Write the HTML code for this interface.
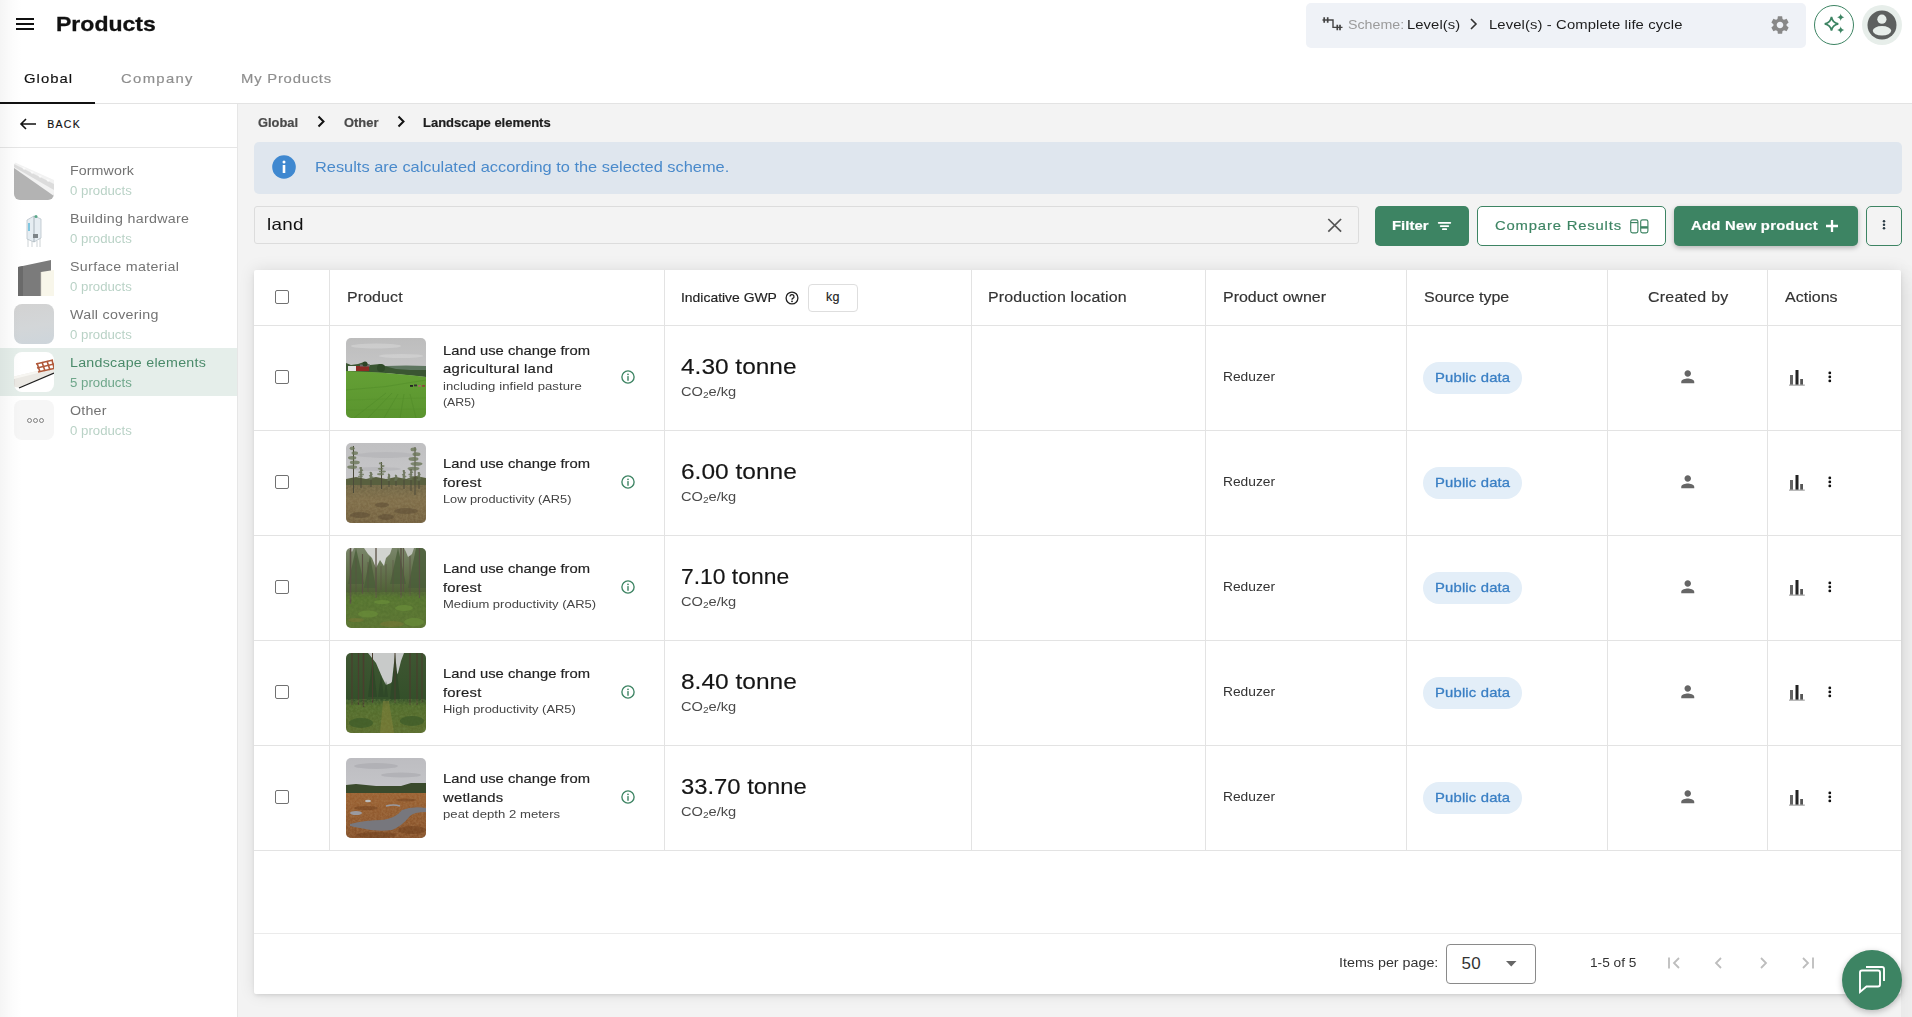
<!DOCTYPE html>
<html><head><meta charset="utf-8">
<style>
*{box-sizing:border-box;margin:0;padding:0}
html,body{width:1912px;height:1017px;overflow:hidden;background:#f3f3f3;font-family:"Liberation Sans",sans-serif;color:#222}
.a{position:absolute}
.t{position:absolute;white-space:nowrap;line-height:1}
svg.a{overflow:visible}
</style></head><body>
<div class="a" style="left:0px;top:0px;width:1912px;height:103px;background:#fff"></div>
<div class="a" style="left:0px;top:103px;width:1912px;height:1px;background:#e3e3e3"></div>
<div class="a" style="left:0px;top:104px;width:237px;height:913px;background:#fff"></div>
<div class="a" style="left:237px;top:104px;width:1px;height:913px;background:#e6e6e6"></div>
<div class="a" style="left:16px;top:18px;width:18px;height:2px;background:#111"></div>
<div class="a" style="left:16px;top:23px;width:18px;height:2px;background:#111"></div>
<div class="a" style="left:16px;top:28px;width:18px;height:2px;background:#111"></div>
<div class="t" id="tx0" style="left:56px;top:13.22px;font-size:21px;font-weight:700;color:#111;letter-spacing:0.000px;transform-origin:0 0;transform:scaleX(1.0970);-webkit-text-stroke:0.3px #111;">Products</div>
<div class="a" style="left:1306px;top:3px;width:500px;height:45px;background:#eff2f7;border-radius:5px"></div>
<svg class="a" style="left:1322px;top:16px;" width="22" height="16" viewBox="0 0 22 16"><g fill="none" stroke="#444"><path d="M2.2 1.2v5.5M5.7 1.2v5.5" stroke-width="1.7"/><path d="M0.5 4h10.5v7.4h9.5" stroke-width="1.4"/><path d="M15.3 8.8v5.4M18 8.8v5.4" stroke-width="1.7"/></g></svg>
<div class="t" id="tx1" style="left:1348px;top:18.30px;font-size:13px;font-weight:400;color:#9b9b9b;letter-spacing:0.000px;transform-origin:0 0;transform:scaleX(1.0940);">Scheme:</div>
<div class="t" id="tx2" style="left:1407px;top:18.30px;font-size:13px;font-weight:400;color:#1e1e1e;letter-spacing:0.058px;transform-origin:0 0;transform:scaleX(1.1400);">Level(s)</div>
<svg class="a" style="left:1469px;top:18px;" width="10" height="12" viewBox="0 0 10 12"><path d="M2 1l5 5-5 5" fill="none" stroke="#333" stroke-width="1.6"/></svg>
<div class="t" id="tx3" style="left:1488.6px;top:18.30px;font-size:13px;font-weight:400;color:#1e1e1e;letter-spacing:0.095px;transform-origin:0 0;transform:scaleX(1.1400);">Level(s) - Complete life cycle</div>
<svg class="a" style="left:1769px;top:13.5px" width="22" height="22" viewBox="0 0 24 24"><path fill="#888" d="M19.14 12.94c.04-.3.06-.61.06-.94 0-.32-.02-.64-.07-.94l2.03-1.58c.18-.14.23-.41.12-.61l-1.92-3.32c-.12-.22-.37-.29-.59-.22l-2.39.96c-.5-.38-1.03-.7-1.62-.94l-.36-2.54c-.04-.24-.24-.41-.48-.41h-3.84c-.24 0-.43.17-.47.41l-.36 2.54c-.59.24-1.13.57-1.62.94l-2.39-.96c-.22-.08-.47 0-.59.22L2.74 8.87c-.12.21-.08.47.12.61l2.03 1.58c-.05.3-.09.63-.09.94s.02.64.07.94l-2.03 1.58c-.18.14-.23.41-.12.61l1.92 3.32c.12.22.37.29.59.22l2.39-.96c.5.38 1.03.7 1.62.94l.36 2.54c.05.24.24.41.48.41h3.84c.24 0 .44-.17.47-.41l.36-2.54c.59-.24 1.13-.56 1.62-.94l2.39.96c.22.08.47 0 .59-.22l1.92-3.32c.12-.22.07-.47-.12-.61l-2.01-1.58zM12 15.6c-1.98 0-3.6-1.62-3.6-3.6s1.62-3.6 3.6-3.6 3.6 1.62 3.6 3.6-1.62 3.6-3.6 3.6z"/></svg>
<div class="a" style="left:1814px;top:5px;width:40px;height:40px;border:1.5px solid #3d8463;border-radius:50%;background:#fff"></div>
<svg class="a" style="left:1822px;top:12px;" width="24" height="24" viewBox="0 0 24 24"><g fill="#3d8463"><path d="M9.5 5 Q10.5 10.8 16.3 11.8 Q10.5 12.8 9.5 18.6 Q8.5 12.8 2.7 11.8 Q8.5 10.8 9.5 5Z" fill="none" stroke="#3d8463" stroke-width="1.7"/><path d="M18.7 1.6 Q19.2 4.8 22.3 5.3 Q19.2 5.8 18.7 9 Q18.2 5.8 15.1 5.3 Q18.2 4.8 18.7 1.6Z"/><path d="M18.7 14.3 Q19.2 17.5 22.3 18 Q19.2 18.5 18.7 21.7 Q18.2 18.5 15.1 18 Q18.2 17.5 18.7 14.3Z"/></g></svg>
<div class="a" style="left:1862px;top:5px;width:40px;height:40px;border-radius:50%;background:#e7eeea"></div>
<svg class="a" style="left:1867px;top:10px;" width="30" height="30" viewBox="0 0 30 30"><circle cx="15" cy="15" r="14.5" fill="#5d605f"/><circle cx="14.9" cy="9.2" r="4.6" fill="#e7eeea"/><ellipse cx="15" cy="20.8" rx="9.2" ry="4.8" fill="#e7eeea"/></svg>
<div class="t" id="tx4" style="left:23.5px;top:71.90px;font-size:13px;font-weight:400;color:#111;letter-spacing:0.903px;transform-origin:0 0;transform:scaleX(1.1400);-webkit-text-stroke:0.16px #111;">Global</div>
<div class="t" id="tx5" style="left:120.7px;top:71.90px;font-size:13px;font-weight:400;color:#8e8e8e;letter-spacing:1.178px;transform-origin:0 0;transform:scaleX(1.1400);-webkit-text-stroke:0.16px #8e8e8e;">Company</div>
<div class="t" id="tx6" style="left:241px;top:71.90px;font-size:13px;font-weight:400;color:#8e8e8e;letter-spacing:0.686px;transform-origin:0 0;transform:scaleX(1.1400);-webkit-text-stroke:0.16px #8e8e8e;">My Products</div>
<div class="a" style="left:0px;top:101.5px;width:95px;height:2.5px;background:#111"></div>
<svg class="a" style="left:19px;top:118px;" width="18" height="12" viewBox="0 0 18 12"><path d="M7 1L2 6l5 5M2 6h15" fill="none" stroke="#111" stroke-width="1.6"/></svg>
<div class="t" id="tx7" style="left:47.2px;top:118.91px;font-size:10.5px;font-weight:400;color:#111;letter-spacing:1.300px;transform-origin:0 0;transform:none;-webkit-text-stroke:0.3px #111;-webkit-text-stroke:0.16px #111;">BACK</div>
<div class="a" style="left:0px;top:147px;width:237px;height:1px;background:#e6e6e6"></div>
<svg class="a" style="left:14px;top:160px" width="40" height="40" viewBox="0 0 40 40"><defs><clipPath id="fwc"><rect width="40" height="40" rx="6"/></clipPath></defs><g clip-path="url(#fwc)"><path d="M0 7 L40 34 V40 H0Z" fill="#b3b3b3"/><path d="M0 2 L40 20 V36 L0 8Z" fill="#f2f2f2"/><path d="M0 4 L40 24 V30 L0 7Z" fill="#dcdcdc"/><g fill="#fafafa"><path d="M8 7l2 3 2-2z"/><path d="M16 11l2 3 2-2z"/><path d="M24 15l2 3 2-2z"/><path d="M32 19l2 3 2-2z"/></g></g></svg>
<div class="t" id="tx8" style="left:70.3px;top:165.12px;font-size:12.5px;font-weight:400;color:#737373;letter-spacing:0.062px;transform-origin:0 0;transform:scaleX(1.1400);">Formwork</div>
<div class="t" id="tx9" style="left:70.3px;top:185.24px;font-size:12px;font-weight:400;color:#b9d2c6;letter-spacing:0.000px;transform-origin:0 0;transform:scaleX(1.1019);">0 products</div>
<svg class="a" style="left:24px;top:214px" width="20" height="34" viewBox="0 0 20 34"><path d="M3 6 L10 2 L17 5 V24 L10 28 L3 25Z" fill="#e6edf2" stroke="#b9c3ca" stroke-width=".8"/><path d="M10 2 V28" stroke="#9aa6ae" stroke-width=".8"/><rect x="4" y="9" width="2" height="8" fill="#7fc6e0"/><path d="M4 33 V25 M8 33 V27 M13 33 V27 M16 33 V24" stroke="#c0c8cc" stroke-width=".8"/><rect x="9" y="20" width="5" height="4" fill="#7d8488"/><circle cx="12" cy="2.5" r="1.5" fill="#5aa88a"/></svg>
<div class="t" id="tx10" style="left:70.3px;top:213.12px;font-size:12.5px;font-weight:400;color:#737373;letter-spacing:0.272px;transform-origin:0 0;transform:scaleX(1.1400);">Building hardware</div>
<div class="t" id="tx11" style="left:70.3px;top:233.24px;font-size:12px;font-weight:400;color:#b9d2c6;letter-spacing:0.000px;transform-origin:0 0;transform:scaleX(1.1019);">0 products</div>
<svg class="a" style="left:17px;top:260px" width="38" height="37" viewBox="0 0 38 37"><path d="M1 7 L34 0 V36 H1Z" fill="#7b7b7b"/><path d="M1 7 L6 6 V36 H1Z" fill="#6a6a6a"/><path d="M24 12 L37 10 V36 H24Z" fill="#f8f6ea"/><path d="M24 12 V36" stroke="#d0cfc4" stroke-width=".6"/></svg>
<div class="t" id="tx12" style="left:70.3px;top:261.12px;font-size:12.5px;font-weight:400;color:#737373;letter-spacing:0.297px;transform-origin:0 0;transform:scaleX(1.1400);">Surface material</div>
<div class="t" id="tx13" style="left:70.3px;top:281.24px;font-size:12px;font-weight:400;color:#b9d2c6;letter-spacing:0.000px;transform-origin:0 0;transform:scaleX(1.1019);">0 products</div>
<div class="a" style="left:14px;top:304px;width:40px;height:40px;border-radius:8px;background:linear-gradient(170deg,#d2d2d2,#d3d6d8 55%,#cdd5db)"></div>
<div class="t" id="tx14" style="left:70.3px;top:309.12px;font-size:12.5px;font-weight:400;color:#737373;letter-spacing:0.251px;transform-origin:0 0;transform:scaleX(1.1400);">Wall covering</div>
<div class="t" id="tx15" style="left:70.3px;top:329.24px;font-size:12px;font-weight:400;color:#b9d2c6;letter-spacing:0.000px;transform-origin:0 0;transform:scaleX(1.1019);">0 products</div>
<div class="a" style="left:0px;top:348px;width:237px;height:48px;background:#e5eeea"></div>
<svg class="a" style="left:14px;top:352px" width="40" height="40" viewBox="0 0 40 40"><rect width="40" height="40" rx="8" fill="#fff"/><defs><clipPath id="lsc"><rect width="40" height="40" rx="8"/></clipPath></defs><g clip-path="url(#lsc)"><path d="M0 24.5 L40 15 V21 L6 35.5 L0 35Z" fill="#ebe9e4"/><path d="M0 24.5 L40 15 L40 17 L0 27Z" fill="#f7f6f2"/><path d="M0 27 V35" stroke="#d6d4cf" stroke-width="1"/><path d="M5 36 L40 21" stroke="#1e1e1e" stroke-width="1.3"/><g fill="none" stroke="#b0593a" stroke-width="1.6"><path d="M22 12 L39 8"/><path d="M23 16 L40 12"/><path d="M24 20 L40 16.5"/><path d="M23 11 L26 20"/><path d="M28 10 L31 19"/><path d="M33 9 L36 18"/><path d="M38 8 L40 16"/></g></g></svg>
<div class="t" id="tx16" style="left:70.3px;top:357.12px;font-size:12.5px;font-weight:400;color:#4a8a6a;letter-spacing:0.223px;transform-origin:0 0;transform:scaleX(1.1400);">Landscape elements</div>
<div class="t" id="tx17" style="left:70.3px;top:377.24px;font-size:12px;font-weight:400;color:#6fa78b;letter-spacing:0.000px;transform-origin:0 0;transform:scaleX(1.1019);">5 products</div>
<div class="a" style="left:14px;top:400px;width:40px;height:40px;border-radius:8px;background:#f6f6f6"></div><svg class="a" style="left:27px;top:418px" width="17" height="5" viewBox="0 0 17 5"><g fill="none" stroke="#666" stroke-width=".8"><circle cx="2.5" cy="2.5" r="2"/><circle cx="8.5" cy="2.5" r="2"/><circle cx="14.5" cy="2.5" r="2"/></g></svg>
<div class="t" id="tx18" style="left:70.3px;top:405.12px;font-size:12.5px;font-weight:400;color:#737373;letter-spacing:0.175px;transform-origin:0 0;transform:scaleX(1.1400);">Other</div>
<div class="t" id="tx19" style="left:70.3px;top:425.24px;font-size:12px;font-weight:400;color:#b9d2c6;letter-spacing:0.000px;transform-origin:0 0;transform:scaleX(1.1019);">0 products</div>
<div class="t" id="tx20" style="left:258.3px;top:116.84px;font-size:12px;font-weight:700;color:#4a4a4a;letter-spacing:0.000px;transform-origin:0 0;transform:scaleX(1.0719);-webkit-text-stroke:0.2px #4a4a4a;">Global</div>
<svg class="a" style="left:316px;top:115px;" width="10" height="13" viewBox="0 0 10 13"><path d="M2.5 1.5l5 5-5 5" fill="none" stroke="#111" stroke-width="2"/></svg>
<div class="t" id="tx21" style="left:343.6px;top:116.84px;font-size:12px;font-weight:700;color:#4a4a4a;letter-spacing:0.000px;transform-origin:0 0;transform:scaleX(1.0755);-webkit-text-stroke:0.2px #4a4a4a;">Other</div>
<svg class="a" style="left:396px;top:115px;" width="10" height="13" viewBox="0 0 10 13"><path d="M2.5 1.5l5 5-5 5" fill="none" stroke="#111" stroke-width="2"/></svg>
<div class="t" id="tx22" style="left:423px;top:116.84px;font-size:12px;font-weight:700;color:#1e1e1e;letter-spacing:0.000px;transform-origin:0 0;transform:scaleX(1.0811);-webkit-text-stroke:0.2px #1e1e1e;">Landscape elements</div>
<div class="a" style="left:254px;top:142px;width:1648px;height:52px;background:#dfe6ee;border-radius:5px"></div>
<svg class="a" style="left:272px;top:155px;" width="24" height="24" viewBox="0 0 24 24"><circle cx="12" cy="12" r="11.8" fill="#3f88d0"/><rect x="10.7" y="10" width="2.6" height="8" fill="#fff"/><circle cx="12" cy="7" r="1.5" fill="#fff"/></svg>
<div class="t" id="tx23" style="left:314.5px;top:159.73px;font-size:14.5px;font-weight:400;color:#4a8acb;letter-spacing:0.000px;transform-origin:0 0;transform:scaleX(1.1295);">Results are calculated according to the selected scheme.</div>
<div class="a" style="left:254px;top:206px;width:1105px;height:38px;border:1px solid #dcdcdc;border-radius:3px;background:#f3f3f3"></div>
<div class="t" id="tx24" style="left:267px;top:215.83px;font-size:16.5px;font-weight:400;color:#111;letter-spacing:0.273px;transform-origin:0 0;transform:scaleX(1.1400);">land</div>
<svg class="a" style="left:1327px;top:218px;" width="15" height="15" viewBox="0 0 15 15"><path d="M1.3 1l12.8 12.6M14.1 1L1.3 13.6" stroke="#555" stroke-width="1.7"/></svg>
<div class="a" style="left:1375px;top:206px;width:94px;height:40px;background:#3d8463;border-radius:5px"></div>
<div class="t" id="tx25" style="left:1392.4px;top:219.00px;font-size:13px;font-weight:700;color:#fff;letter-spacing:0.042px;transform-origin:0 0;transform:scaleX(1.1400);-webkit-text-stroke:0.2px #fff;">Filter</div>
<svg class="a" style="left:1438px;top:221px;" width="14" height="10" viewBox="0 0 14 10"><path d="M0.7 1.8h11.6M2.7 5.1h7.6M4.9 8.2h3.3" stroke="#fff" stroke-width="1.8" stroke-linecap="round"/></svg>
<div class="a" style="left:1477px;top:206px;width:189px;height:40px;border:1.5px solid #3d8463;border-radius:5px;background:#fff"></div>
<div class="t" id="tx26" style="left:1494.9px;top:219.00px;font-size:13px;font-weight:400;color:#3d8463;letter-spacing:0.726px;transform-origin:0 0;transform:scaleX(1.1400);-webkit-text-stroke:0.16px #3d8463;">Compare Results</div>
<svg class="a" style="left:1629px;top:219px;" width="20" height="14" viewBox="0 0 20 14"><g fill="none" stroke="#3d8463" stroke-width="1.15"><rect x="1.7" y="0.8" width="7.2" height="13" rx="1.8"/><path d="M1.7 3.6h7.2"/><rect x="11.7" y="0.8" width="7.2" height="13" rx="1.8"/></g><rect x="11.7" y="7.2" width="7.2" height="2.4" fill="#3d8463"/></svg>
<div class="a" style="left:1674px;top:206px;width:184px;height:40px;background:#3d8463;border-radius:5px;box-shadow:0 2px 5px rgba(0,0,0,.25)"></div>
<div class="t" id="tx27" style="left:1691.4px;top:219.00px;font-size:13px;font-weight:700;color:#fff;letter-spacing:0.258px;transform-origin:0 0;transform:scaleX(1.1400);-webkit-text-stroke:0.2px #fff;">Add New product</div>
<svg class="a" style="left:1826px;top:219.5px;" width="12" height="12" viewBox="0 0 12 12"><path d="M6 0v12M0 6h12" stroke="#fff" stroke-width="2.3"/></svg>
<div class="a" style="left:1866px;top:206px;width:36px;height:40px;border:1.5px solid #3d8463;border-radius:5px;background:transparent"></div>
<svg class="a" style="left:1882px;top:219px;" width="4" height="12" viewBox="0 0 4 12"><circle cx="2" cy="2.3" r="1.25" fill="#2a3a44"/><circle cx="2" cy="5.8" r="1.25" fill="#2a3a44"/><circle cx="2" cy="9.3" r="1.25" fill="#2a3a44"/></svg>
<div class="a" style="left:254px;top:270px;width:1647px;height:724px;background:#fff;border-radius:2px;box-shadow:0 2px 4px -1px rgba(0,0,0,.12),0 0 16px rgba(0,0,0,.10)"></div>
<div class="a" style="left:254px;top:325px;width:1647px;height:1px;background:#e3e3e3"></div>
<div class="a" style="left:254px;top:430px;width:1647px;height:1px;background:#e3e3e3"></div>
<div class="a" style="left:254px;top:535px;width:1647px;height:1px;background:#e3e3e3"></div>
<div class="a" style="left:254px;top:640px;width:1647px;height:1px;background:#e3e3e3"></div>
<div class="a" style="left:254px;top:745px;width:1647px;height:1px;background:#e3e3e3"></div>
<div class="a" style="left:254px;top:850px;width:1647px;height:1px;background:#e3e3e3"></div>
<div class="a" style="left:254px;top:933px;width:1647px;height:1px;background:#ebebeb"></div>
<div class="a" style="left:329px;top:270px;width:1px;height:580px;background:#e3e3e3"></div>
<div class="a" style="left:664px;top:270px;width:1px;height:580px;background:#e3e3e3"></div>
<div class="a" style="left:971px;top:270px;width:1px;height:580px;background:#e3e3e3"></div>
<div class="a" style="left:1205px;top:270px;width:1px;height:580px;background:#e3e3e3"></div>
<div class="a" style="left:1406px;top:270px;width:1px;height:580px;background:#e3e3e3"></div>
<div class="a" style="left:1607px;top:270px;width:1px;height:580px;background:#e3e3e3"></div>
<div class="a" style="left:1767px;top:270px;width:1px;height:580px;background:#e3e3e3"></div>
<div class="a" style="left:275px;top:290px;width:14px;height:14px;border:1.8px solid #717171;border-radius:2px"></div>
<div class="t" id="tx28" style="left:346.7px;top:289.95px;font-size:14px;font-weight:400;color:#333;letter-spacing:0.084px;transform-origin:0 0;transform:scaleX(1.1400);-webkit-text-stroke:0.16px #333;">Product</div>
<div class="t" id="tx29" style="left:681.4px;top:290.50px;font-size:13px;font-weight:400;color:#222;letter-spacing:0.000px;transform-origin:0 0;transform:scaleX(1.0705);-webkit-text-stroke:0.16px #222;">Indicative GWP</div>
<svg class="a" style="left:785px;top:291px;" width="14" height="14" viewBox="0 0 14 14"><circle cx="7" cy="7" r="5.9" fill="none" stroke="#222" stroke-width="1.3"/><path d="M5 5.6a2 2 0 1 1 2.8 1.8c-.6.3-.8.6-.8 1.3" fill="none" stroke="#222" stroke-width="1.3"/><circle cx="7" cy="10.3" r=".9" fill="#222"/></svg>
<div class="a" style="left:808px;top:284px;width:50px;height:28px;border:1px solid #dedede;border-radius:4px"></div>
<div class="t" id="tx30" style="left:826px;top:290.92px;font-size:12.5px;font-weight:400;color:#222;letter-spacing:0.300px;transform-origin:0 0;transform:none;-webkit-text-stroke:0.16px #222;">kg</div>
<div class="t" id="tx31" style="left:988.4px;top:289.95px;font-size:14px;font-weight:400;color:#333;letter-spacing:0.143px;transform-origin:0 0;transform:scaleX(1.1400);-webkit-text-stroke:0.16px #333;">Production location</div>
<div class="t" id="tx32" style="left:1222.6px;top:289.95px;font-size:14px;font-weight:400;color:#333;letter-spacing:0.004px;transform-origin:0 0;transform:scaleX(1.1400);-webkit-text-stroke:0.16px #333;">Product owner</div>
<div class="t" id="tx33" style="left:1423.6px;top:289.95px;font-size:14px;font-weight:400;color:#333;letter-spacing:0.000px;transform-origin:0 0;transform:scaleX(1.1400);-webkit-text-stroke:0.16px #333;">Source type</div>
<div class="t" id="tx34" style="left:1648px;top:289.95px;font-size:14px;font-weight:400;color:#333;letter-spacing:0.215px;transform-origin:0 0;transform:scaleX(1.1400);-webkit-text-stroke:0.16px #333;">Created by</div>
<div class="t" id="tx35" style="left:1785px;top:289.95px;font-size:14px;font-weight:400;color:#333;letter-spacing:0.033px;transform-origin:0 0;transform:scaleX(1.1400);-webkit-text-stroke:0.16px #333;">Actions</div>
<div class="a" style="left:275px;top:370px;width:14px;height:14px;border:1.8px solid #717171;border-radius:2px"></div>
<svg class="a" style="left:346px;top:338px;border-radius:5px" width="80" height="80" viewBox="0 0 80 80"><clipPath id="cagri"><rect width="80" height="80" rx="5"/></clipPath><g clip-path="url(#cagri)"><defs><linearGradient id="ag1" x1="0" y1="0" x2="0" y2="1"><stop offset="0" stop-color="#bdbdbd"/><stop offset="1" stop-color="#d2d2d4"/></linearGradient><linearGradient id="ag2" x1="0" y1="0" x2="0" y2="1"><stop offset="0" stop-color="#64a035"/><stop offset="1" stop-color="#5a942e"/></linearGradient></defs><rect width="80" height="80" fill="url(#ag1)"/><g fill="#d6d6d6" opacity=".6"><ellipse cx="30" cy="8" rx="25" ry="2.5"/><ellipse cx="55" cy="18" rx="22" ry="2"/></g><path d="M40 28 L60 27.5 L80 28 V33 H40Z" fill="#5e7660"/><path d="M0 30 L0 25 L5 27 L12 26 L18 24 L24 27 L34 26 L42 29 L50 31 L64 32 L80 32 V39 L40 35 L0 34Z" fill="#3a5632"/><rect x="2" y="28" width="8" height="5" fill="#e6e6e6"/><rect x="10" y="28" width="13" height="5" fill="#8e2a24"/><rect x="14" y="26.5" width="10" height="2" fill="#6a6a6a"/><circle cx="19" cy="26" r="2.5" fill="#2c4426"/><circle cx="35" cy="30" r="4" fill="#2f4a28"/><path d="M0 33 L25 34 Q55 36 80 39 V80 H0Z" fill="url(#ag2)"/><g stroke="#4a8426" stroke-width=".8" opacity=".45" fill="none"><path d="M0 52 Q40 50 80 42"/><path d="M0 62 L80 60" opacity=".5"/><path d="M0 72 L80 71" opacity=".5"/><path d="M8 80 L40 55"/><path d="M22 80 L46 55"/><path d="M38 80 L52 56"/><path d="M54 80 L58 56"/><path d="M70 80 L64 56"/></g><rect x="64" y="47" width="3" height="1.8" fill="#222"/><rect x="68" y="46.5" width="3" height="1.8" fill="#333"/><rect x="72" y="47" width="3" height="1.8" fill="#a07060"/><rect x="76" y="47" width="3" height="1.8" fill="#8a4a3a"/></g></svg>
<div class="t" id="tx36" style="left:442.6px;top:343.80px;font-size:13px;font-weight:400;color:#222;letter-spacing:0.000px;transform-origin:0 0;transform:scaleX(1.1369);-webkit-text-stroke:0.16px #222;">Land use change from</div>
<div class="t" id="tx37" style="left:442.6px;top:362.30px;font-size:13px;font-weight:400;color:#222;letter-spacing:0.294px;transform-origin:0 0;transform:scaleX(1.1400);-webkit-text-stroke:0.16px #222;">agricultural land</div>
<div class="t" id="tx38" style="left:442.6px;top:380.77px;font-size:11.5px;font-weight:400;color:#444;letter-spacing:0.066px;transform-origin:0 0;transform:scaleX(1.1400);">including infield pasture</div>
<div class="t" id="tx39" style="left:442.6px;top:397.07px;font-size:11.5px;font-weight:400;color:#444;letter-spacing:0.000px;transform-origin:0 0;transform:scaleX(1.0683);">(AR5)</div>
<svg class="a" style="left:620.5px;top:370px;" width="14" height="14" viewBox="0 0 14 14"><circle cx="7" cy="7" r="6.1" fill="none" stroke="#3d8463" stroke-width="1.35"/><path d="M7 6.6v3.6" stroke="#3d8463" stroke-width="1.4" stroke-linecap="round"/><circle cx="7" cy="4.3" r=".85" fill="#3d8463"/></svg>
<div class="t" id="tx40" style="left:681.4px;top:356.15px;font-size:22.5px;font-weight:400;color:#151515;letter-spacing:0.000px;transform-origin:0 0;transform:scaleX(1.0865);-webkit-text-stroke:0.16px #151515;">4.30 tonne</div>
<div class="t" id="tx41" style="left:681.4px;top:384.70px;font-size:13px;font-weight:400;color:#4a4a4a;letter-spacing:0.000px;transform-origin:0 0;transform:scaleX(1.1258);">CO<span style="font-size:9px;vertical-align:-2px">2</span>e/kg</div>
<div class="t" id="tx42" style="left:1222.8px;top:369.90px;font-size:13px;font-weight:400;color:#333;letter-spacing:0.000px;transform-origin:0 0;transform:scaleX(1.0603);">Reduzer</div>
<div class="a" style="left:1423px;top:362px;width:99px;height:32px;background:#e3eef8;border-radius:16px"></div>
<div class="t" id="tx43" style="left:1435.4px;top:371.00px;font-size:13px;font-weight:400;color:#3a7fc4;letter-spacing:0.154px;transform-origin:0 0;transform:scaleX(1.1400);-webkit-text-stroke:0.3px #3a7fc4;">Public data</div>
<svg class="a" style="left:1677.75px;top:367.4px" width="19.5" height="19.5" viewBox="0 0 24 24"><path fill="#666" d="M12 12c2.21 0 4-1.79 4-4s-1.79-4-4-4-4 1.79-4 4 1.79 4 4 4zm0 2c-2.67 0-8 1.34-8 4v2h16v-2c0-2.66-5.33-4-8-4z"/></svg>
<svg class="a" style="left:1788px;top:369px;" width="18" height="17" viewBox="0 0 18 17"><rect x="2" y="6" width="3" height="10" fill="#666"/><rect x="7.5" y="1" width="3" height="15" fill="#222"/><rect x="12.2" y="10" width="2.8" height="6" fill="#555"/><rect x="1" y="15.5" width="15.8" height="1.3" fill="#aaa"/></svg>
<svg class="a" style="left:1828px;top:371px;" width="4" height="12" viewBox="0 0 4 12"><circle cx="1.8" cy="1.9" r="1.4" fill="#111"/><circle cx="1.8" cy="5.9" r="1.4" fill="#111"/><circle cx="1.8" cy="9.9" r="1.4" fill="#111"/></svg>
<div class="a" style="left:275px;top:475px;width:14px;height:14px;border:1.8px solid #717171;border-radius:2px"></div>
<svg class="a" style="left:346px;top:443px;border-radius:5px" width="80" height="80" viewBox="0 0 80 80"><clipPath id="cflow"><rect width="80" height="80" rx="5"/></clipPath><g clip-path="url(#cflow)"><defs><linearGradient id="fl1" x1="0" y1="0" x2="0" y2="1"><stop offset="0" stop-color="#c0c0c2"/><stop offset="1" stop-color="#cdcdcf"/></linearGradient><linearGradient id="fl2" x1="0" y1="0" x2="0" y2="1"><stop offset="0" stop-color="#6f6646"/><stop offset=".4" stop-color="#806e4a"/><stop offset="1" stop-color="#73603f"/></linearGradient></defs><rect width="80" height="80" fill="url(#fl1)"/><g fill="#b3b3b6" opacity=".6"><ellipse cx="40" cy="12" rx="30" ry="3"/><ellipse cx="30" cy="26" rx="25" ry="2"/></g><path d="M0 36 L10 34 L20 36 L30 34 L40 36 L50 34 L60 36 L70 33 L80 35 V44 H0Z" fill="#59603f"/><rect y="42" width="80" height="38" fill="url(#fl2)"/><filter id="fln" x="0" y="0" width="1" height="1"><feTurbulence type="fractalNoise" baseFrequency=".4" numOctaves="2" seed="7"/><feColorMatrix values="0 0 0 0 0.3  0 0 0 0 0.24  0 0 0 0 0.12  0 0 0 -1.3 0.95"/></filter><rect y="42" width="80" height="38" fill="#000" filter="url(#fln)" opacity=".7"/><g fill="#5e4e36" opacity=".55"><ellipse cx="36" cy="62" rx="7" ry="2.5"/><ellipse cx="60" cy="68" rx="12" ry="3"/><ellipse cx="14" cy="72" rx="10" ry="3"/><ellipse cx="40" cy="74" rx="8" ry="3"/></g><path d="M7.5 3 V50" stroke="#4c4a3a" stroke-width="1"/><ellipse cx="6.2" cy="5.3" rx="2.5" ry="1.9" fill="#6a7658" opacity=".8"/><ellipse cx="8.8" cy="10.1" rx="3.3" ry="1.9" fill="#6a7658" opacity=".8"/><ellipse cx="6.2" cy="14.8" rx="4.2" ry="1.9" fill="#6a7658" opacity=".8"/><ellipse cx="8.8" cy="19.5" rx="5.0" ry="1.9" fill="#6a7658" opacity=".8"/><ellipse cx="6.2" cy="24.1" rx="5.0" ry="1.9" fill="#6a7658" opacity=".8"/><path d="M69 4 V52" stroke="#4c4a3a" stroke-width="1"/><ellipse cx="67.5" cy="6.4" rx="3.0" ry="1.9" fill="#6a7658" opacity=".8"/><ellipse cx="70.5" cy="11.2" rx="4.0" ry="1.9" fill="#6a7658" opacity=".8"/><ellipse cx="67.5" cy="16.0" rx="5.0" ry="1.9" fill="#6a7658" opacity=".8"/><ellipse cx="70.5" cy="20.8" rx="6.0" ry="1.9" fill="#6a7658" opacity=".8"/><ellipse cx="67.5" cy="25.6" rx="6.0" ry="1.9" fill="#6a7658" opacity=".8"/><path d="M35.5 19 V46" stroke="#4c4a3a" stroke-width="1"/><ellipse cx="34.6" cy="20.4" rx="1.8" ry="1.1" fill="#6a7658" opacity=".8"/><ellipse cx="36.4" cy="23.1" rx="2.3" ry="1.1" fill="#6a7658" opacity=".8"/><ellipse cx="34.6" cy="25.8" rx="2.9" ry="1.1" fill="#6a7658" opacity=".8"/><ellipse cx="36.4" cy="28.5" rx="3.5" ry="1.1" fill="#6a7658" opacity=".8"/><ellipse cx="34.6" cy="31.2" rx="3.5" ry="1.1" fill="#6a7658" opacity=".8"/><path d="M15 24 V45" stroke="#4c4a3a" stroke-width="1"/><ellipse cx="14.4" cy="25.1" rx="1.2" ry="1.0" fill="#6a7658" opacity=".8"/><ellipse cx="15.6" cy="27.2" rx="1.7" ry="1.0" fill="#6a7658" opacity=".8"/><ellipse cx="14.4" cy="29.2" rx="2.1" ry="1.0" fill="#6a7658" opacity=".8"/><ellipse cx="15.6" cy="31.4" rx="2.5" ry="1.0" fill="#6a7658" opacity=".8"/><ellipse cx="14.4" cy="33.5" rx="2.5" ry="1.0" fill="#6a7658" opacity=".8"/><path d="M25 29 V44" stroke="#4c4a3a" stroke-width="1"/><ellipse cx="24.5" cy="29.8" rx="1.0" ry="1.0" fill="#6a7658" opacity=".8"/><ellipse cx="25.5" cy="31.2" rx="1.3" ry="1.0" fill="#6a7658" opacity=".8"/><ellipse cx="24.5" cy="32.8" rx="1.7" ry="1.0" fill="#6a7658" opacity=".8"/><ellipse cx="25.5" cy="34.2" rx="2.0" ry="1.0" fill="#6a7658" opacity=".8"/><ellipse cx="24.5" cy="35.8" rx="2.0" ry="1.0" fill="#6a7658" opacity=".8"/><path d="M58 27 V46" stroke="#4c4a3a" stroke-width="1"/><ellipse cx="57.5" cy="27.9" rx="1.0" ry="1.0" fill="#6a7658" opacity=".8"/><ellipse cx="58.5" cy="29.8" rx="1.3" ry="1.0" fill="#6a7658" opacity=".8"/><ellipse cx="57.5" cy="31.8" rx="1.7" ry="1.0" fill="#6a7658" opacity=".8"/><ellipse cx="58.5" cy="33.6" rx="2.0" ry="1.0" fill="#6a7658" opacity=".8"/><ellipse cx="57.5" cy="35.5" rx="2.0" ry="1.0" fill="#6a7658" opacity=".8"/><path d="M65 26 V48" stroke="#4c4a3a" stroke-width="1"/><ellipse cx="64.4" cy="27.1" rx="1.2" ry="1.0" fill="#6a7658" opacity=".8"/><ellipse cx="65.6" cy="29.3" rx="1.7" ry="1.0" fill="#6a7658" opacity=".8"/><ellipse cx="64.4" cy="31.5" rx="2.1" ry="1.0" fill="#6a7658" opacity=".8"/><ellipse cx="65.6" cy="33.7" rx="2.5" ry="1.0" fill="#6a7658" opacity=".8"/><ellipse cx="64.4" cy="35.9" rx="2.5" ry="1.0" fill="#6a7658" opacity=".8"/><path d="M73 29 V46" stroke="#4c4a3a" stroke-width="1"/><ellipse cx="72.5" cy="29.9" rx="1.0" ry="1.0" fill="#6a7658" opacity=".8"/><ellipse cx="73.5" cy="31.6" rx="1.3" ry="1.0" fill="#6a7658" opacity=".8"/><ellipse cx="72.5" cy="33.2" rx="1.7" ry="1.0" fill="#6a7658" opacity=".8"/><ellipse cx="73.5" cy="35.0" rx="2.0" ry="1.0" fill="#6a7658" opacity=".8"/><ellipse cx="72.5" cy="36.7" rx="2.0" ry="1.0" fill="#6a7658" opacity=".8"/><path d="M43 31 V44" stroke="#4c4a3a" stroke-width="1"/><ellipse cx="42.6" cy="31.6" rx="0.8" ry="1.0" fill="#6a7658" opacity=".8"/><ellipse cx="43.4" cy="32.9" rx="1.0" ry="1.0" fill="#6a7658" opacity=".8"/><ellipse cx="42.6" cy="34.2" rx="1.2" ry="1.0" fill="#6a7658" opacity=".8"/><ellipse cx="43.4" cy="35.5" rx="1.5" ry="1.0" fill="#6a7658" opacity=".8"/><ellipse cx="42.6" cy="36.9" rx="1.5" ry="1.0" fill="#6a7658" opacity=".8"/><path d="M50 32 V43" stroke="#4c4a3a" stroke-width="1"/><ellipse cx="49.6" cy="32.5" rx="0.8" ry="1.0" fill="#6a7658" opacity=".8"/><ellipse cx="50.4" cy="33.6" rx="1.0" ry="1.0" fill="#6a7658" opacity=".8"/><ellipse cx="49.6" cy="34.8" rx="1.2" ry="1.0" fill="#6a7658" opacity=".8"/><ellipse cx="50.4" cy="35.8" rx="1.5" ry="1.0" fill="#6a7658" opacity=".8"/><ellipse cx="49.6" cy="36.9" rx="1.5" ry="1.0" fill="#6a7658" opacity=".8"/></g></svg>
<div class="t" id="tx44" style="left:442.6px;top:457.10px;font-size:13px;font-weight:400;color:#222;letter-spacing:0.000px;transform-origin:0 0;transform:scaleX(1.1369);-webkit-text-stroke:0.16px #222;">Land use change from</div>
<div class="t" id="tx45" style="left:442.6px;top:475.60px;font-size:13px;font-weight:400;color:#222;letter-spacing:0.214px;transform-origin:0 0;transform:scaleX(1.1400);-webkit-text-stroke:0.16px #222;">forest</div>
<div class="t" id="tx46" style="left:442.6px;top:494.07px;font-size:11.5px;font-weight:400;color:#444;letter-spacing:0.000px;transform-origin:0 0;transform:scaleX(1.1101);">Low productivity (AR5)</div>
<svg class="a" style="left:620.5px;top:475px;" width="14" height="14" viewBox="0 0 14 14"><circle cx="7" cy="7" r="6.1" fill="none" stroke="#3d8463" stroke-width="1.35"/><path d="M7 6.6v3.6" stroke="#3d8463" stroke-width="1.4" stroke-linecap="round"/><circle cx="7" cy="4.3" r=".85" fill="#3d8463"/></svg>
<div class="t" id="tx47" style="left:681.4px;top:461.15px;font-size:22.5px;font-weight:400;color:#151515;letter-spacing:0.000px;transform-origin:0 0;transform:scaleX(1.0884);-webkit-text-stroke:0.16px #151515;">6.00 tonne</div>
<div class="t" id="tx48" style="left:681.4px;top:489.70px;font-size:13px;font-weight:400;color:#4a4a4a;letter-spacing:0.000px;transform-origin:0 0;transform:scaleX(1.1258);">CO<span style="font-size:9px;vertical-align:-2px">2</span>e/kg</div>
<div class="t" id="tx49" style="left:1222.8px;top:474.90px;font-size:13px;font-weight:400;color:#333;letter-spacing:0.000px;transform-origin:0 0;transform:scaleX(1.0603);">Reduzer</div>
<div class="a" style="left:1423px;top:467px;width:99px;height:32px;background:#e3eef8;border-radius:16px"></div>
<div class="t" id="tx50" style="left:1435.4px;top:476.00px;font-size:13px;font-weight:400;color:#3a7fc4;letter-spacing:0.154px;transform-origin:0 0;transform:scaleX(1.1400);-webkit-text-stroke:0.3px #3a7fc4;">Public data</div>
<svg class="a" style="left:1677.75px;top:472.4px" width="19.5" height="19.5" viewBox="0 0 24 24"><path fill="#666" d="M12 12c2.21 0 4-1.79 4-4s-1.79-4-4-4-4 1.79-4 4 1.79 4 4 4zm0 2c-2.67 0-8 1.34-8 4v2h16v-2c0-2.66-5.33-4-8-4z"/></svg>
<svg class="a" style="left:1788px;top:474px;" width="18" height="17" viewBox="0 0 18 17"><rect x="2" y="6" width="3" height="10" fill="#666"/><rect x="7.5" y="1" width="3" height="15" fill="#222"/><rect x="12.2" y="10" width="2.8" height="6" fill="#555"/><rect x="1" y="15.5" width="15.8" height="1.3" fill="#aaa"/></svg>
<svg class="a" style="left:1828px;top:476px;" width="4" height="12" viewBox="0 0 4 12"><circle cx="1.8" cy="1.9" r="1.4" fill="#111"/><circle cx="1.8" cy="5.9" r="1.4" fill="#111"/><circle cx="1.8" cy="9.9" r="1.4" fill="#111"/></svg>
<div class="a" style="left:275px;top:580px;width:14px;height:14px;border:1.8px solid #717171;border-radius:2px"></div>
<svg class="a" style="left:346px;top:548px;border-radius:5px" width="80" height="80" viewBox="0 0 80 80"><clipPath id="cfmed"><rect width="80" height="80" rx="5"/></clipPath><g clip-path="url(#cfmed)"><defs><linearGradient id="fm1" x1="0" y1="0" x2="0" y2="1"><stop offset="0" stop-color="#7a866a"/><stop offset=".35" stop-color="#5f6e48"/><stop offset=".55" stop-color="#4f6236"/><stop offset=".62" stop-color="#557430"/><stop offset="1" stop-color="#5a7232"/></linearGradient><filter id="fmn" x="0" y="0" width="1" height="1"><feTurbulence type="fractalNoise" baseFrequency=".35" numOctaves="2" seed="3"/><feColorMatrix values="0 0 0 0 0.15  0 0 0 0 0.25  0 0 0 0 0.05  0 0 0 -1.2 0.9"/></filter></defs><rect width="80" height="80" fill="url(#fm1)"/><path d="M18 0 H46 L44 6 L40 10 L38 18 L34 12 L30 20 L26 10 L22 6Z" fill="#d2d4d0"/><path d="M58 0 H68 L66 6 L62 9 L60 4Z" fill="#c0c4bc"/><path d="M2 0 H8 L6 4Z" fill="#b8bcb4"/><g fill="#4a5e3a" opacity=".8"><path d="M10 0 L2 36 H18Z"/><path d="M24 8 L18 40 H30Z"/><path d="M52 0 L44 36 H60Z"/><path d="M70 0 L62 40 H80 V0Z"/></g><path d="M4.5 0 V56" stroke="#5a5044" stroke-width="1.6"/><path d="M16.5 6 V46" stroke="#5a5044" stroke-width="1.1"/><path d="M30 0 V50" stroke="#5a5044" stroke-width="1.3"/><path d="M55 0 V50" stroke="#5a5044" stroke-width="1.3"/><path d="M57.5 0 V44" stroke="#5a5044" stroke-width="0.8"/><path d="M73.5 0 V50" stroke="#5a5044" stroke-width="1.2"/><path d="M10 10 V44" stroke="#5a5044" stroke-width="0.7"/><path d="M22 14 V44" stroke="#5a5044" stroke-width="0.7"/><path d="M40 16 V44" stroke="#5a5044" stroke-width="0.7"/><path d="M64 8 V48" stroke="#5a5044" stroke-width="0.8"/><path d="M47 12 V44" stroke="#5a5044" stroke-width="0.6"/><path d="M35 18 V42" stroke="#5a5044" stroke-width="0.6"/><rect y="44" width="80" height="36" fill="#000" filter="url(#fmn)" opacity=".6"/><g fill="#6a8e3a" opacity=".7"><ellipse cx="22" cy="66" rx="10" ry="3.5"/><ellipse cx="58" cy="60" rx="9" ry="3"/><ellipse cx="68" cy="74" rx="10" ry="4"/><ellipse cx="36" cy="54" rx="8" ry="2"/></g><g fill="#8a7a3a" opacity=".35"><ellipse cx="46" cy="76" rx="12" ry="3"/><ellipse cx="10" cy="72" rx="8" ry="2"/></g></g></svg>
<div class="t" id="tx51" style="left:442.6px;top:562.10px;font-size:13px;font-weight:400;color:#222;letter-spacing:0.000px;transform-origin:0 0;transform:scaleX(1.1369);-webkit-text-stroke:0.16px #222;">Land use change from</div>
<div class="t" id="tx52" style="left:442.6px;top:580.60px;font-size:13px;font-weight:400;color:#222;letter-spacing:0.214px;transform-origin:0 0;transform:scaleX(1.1400);-webkit-text-stroke:0.16px #222;">forest</div>
<div class="t" id="tx53" style="left:442.6px;top:599.07px;font-size:11.5px;font-weight:400;color:#444;letter-spacing:0.000px;transform-origin:0 0;transform:scaleX(1.1303);">Medium productivity (AR5)</div>
<svg class="a" style="left:620.5px;top:580px;" width="14" height="14" viewBox="0 0 14 14"><circle cx="7" cy="7" r="6.1" fill="none" stroke="#3d8463" stroke-width="1.35"/><path d="M7 6.6v3.6" stroke="#3d8463" stroke-width="1.4" stroke-linecap="round"/><circle cx="7" cy="4.3" r=".85" fill="#3d8463"/></svg>
<div class="t" id="tx54" style="left:681.4px;top:566.15px;font-size:22.5px;font-weight:400;color:#151515;letter-spacing:0.000px;transform-origin:0 0;transform:scaleX(1.0166);-webkit-text-stroke:0.16px #151515;">7.10 tonne</div>
<div class="t" id="tx55" style="left:681.4px;top:594.70px;font-size:13px;font-weight:400;color:#4a4a4a;letter-spacing:0.000px;transform-origin:0 0;transform:scaleX(1.1258);">CO<span style="font-size:9px;vertical-align:-2px">2</span>e/kg</div>
<div class="t" id="tx56" style="left:1222.8px;top:579.90px;font-size:13px;font-weight:400;color:#333;letter-spacing:0.000px;transform-origin:0 0;transform:scaleX(1.0603);">Reduzer</div>
<div class="a" style="left:1423px;top:572px;width:99px;height:32px;background:#e3eef8;border-radius:16px"></div>
<div class="t" id="tx57" style="left:1435.4px;top:581.00px;font-size:13px;font-weight:400;color:#3a7fc4;letter-spacing:0.154px;transform-origin:0 0;transform:scaleX(1.1400);-webkit-text-stroke:0.3px #3a7fc4;">Public data</div>
<svg class="a" style="left:1677.75px;top:577.4px" width="19.5" height="19.5" viewBox="0 0 24 24"><path fill="#666" d="M12 12c2.21 0 4-1.79 4-4s-1.79-4-4-4-4 1.79-4 4 1.79 4 4 4zm0 2c-2.67 0-8 1.34-8 4v2h16v-2c0-2.66-5.33-4-8-4z"/></svg>
<svg class="a" style="left:1788px;top:579px;" width="18" height="17" viewBox="0 0 18 17"><rect x="2" y="6" width="3" height="10" fill="#666"/><rect x="7.5" y="1" width="3" height="15" fill="#222"/><rect x="12.2" y="10" width="2.8" height="6" fill="#555"/><rect x="1" y="15.5" width="15.8" height="1.3" fill="#aaa"/></svg>
<svg class="a" style="left:1828px;top:581px;" width="4" height="12" viewBox="0 0 4 12"><circle cx="1.8" cy="1.9" r="1.4" fill="#111"/><circle cx="1.8" cy="5.9" r="1.4" fill="#111"/><circle cx="1.8" cy="9.9" r="1.4" fill="#111"/></svg>
<div class="a" style="left:275px;top:685px;width:14px;height:14px;border:1.8px solid #717171;border-radius:2px"></div>
<svg class="a" style="left:346px;top:653px;border-radius:5px" width="80" height="80" viewBox="0 0 80 80"><clipPath id="cfhigh"><rect width="80" height="80" rx="5"/></clipPath><g clip-path="url(#cfhigh)"><defs><linearGradient id="fh1" x1="0" y1="0" x2="0" y2="1"><stop offset="0" stop-color="#3e5632"/><stop offset=".58" stop-color="#34502a"/><stop offset=".66" stop-color="#526c2c"/><stop offset="1" stop-color="#5c6c2e"/></linearGradient></defs><rect width="80" height="80" fill="url(#fh1)"/><path d="M22 0 H58 L55 8 L52 20 L45 30 L40 32 L36 24 L30 10 L26 5Z" fill="#c8cac9"/><g fill="#2f4828"><path d="M26.5 6 L22 44 H31Z"/><path d="M49 1 L44 46 H54Z"/><path d="M35 22 L32 44 H38Z"/><path d="M40 28 L38 44 H42Z"/></g><path d="M6 0 V52" stroke="#4a3e2e" stroke-width="1.2"/><path d="M12.5 0 V52" stroke="#4a3e2e" stroke-width="1.3"/><path d="M17.5 0 V54" stroke="#4a3e2e" stroke-width="1.5"/><path d="M26.5 0 V50" stroke="#4a3e2e" stroke-width="1"/><path d="M49 0 V50" stroke="#4a3e2e" stroke-width="1"/><path d="M64 0 V52" stroke="#4a3e2e" stroke-width="1.3"/><path d="M71 0 V52" stroke="#4a3e2e" stroke-width="1.2"/><path d="M76 0 V50" stroke="#4a3e2e" stroke-width="1"/><filter id="fhn" x="0" y="0" width="1" height="1"><feTurbulence type="fractalNoise" baseFrequency=".4" numOctaves="2" seed="11"/><feColorMatrix values="0 0 0 0 0.15  0 0 0 0 0.24  0 0 0 0 0.06  0 0 0 -1.3 0.95"/></filter><rect y="46" width="80" height="34" fill="#000" filter="url(#fhn)" opacity=".7"/><path d="M37 48 L43 48 L48 80 H34Z" fill="#9a8a40" opacity=".35"/><g fill="#3c5a28" opacity=".7"><ellipse cx="15" cy="70" rx="12" ry="5"/><ellipse cx="66" cy="68" rx="12" ry="5"/></g></g></svg>
<div class="t" id="tx58" style="left:442.6px;top:667.10px;font-size:13px;font-weight:400;color:#222;letter-spacing:0.000px;transform-origin:0 0;transform:scaleX(1.1369);-webkit-text-stroke:0.16px #222;">Land use change from</div>
<div class="t" id="tx59" style="left:442.6px;top:685.60px;font-size:13px;font-weight:400;color:#222;letter-spacing:0.214px;transform-origin:0 0;transform:scaleX(1.1400);-webkit-text-stroke:0.16px #222;">forest</div>
<div class="t" id="tx60" style="left:442.6px;top:704.07px;font-size:11.5px;font-weight:400;color:#444;letter-spacing:0.000px;transform-origin:0 0;transform:scaleX(1.1235);">High productivity (AR5)</div>
<svg class="a" style="left:620.5px;top:685px;" width="14" height="14" viewBox="0 0 14 14"><circle cx="7" cy="7" r="6.1" fill="none" stroke="#3d8463" stroke-width="1.35"/><path d="M7 6.6v3.6" stroke="#3d8463" stroke-width="1.4" stroke-linecap="round"/><circle cx="7" cy="4.3" r=".85" fill="#3d8463"/></svg>
<div class="t" id="tx61" style="left:681.4px;top:671.15px;font-size:22.5px;font-weight:400;color:#151515;letter-spacing:0.000px;transform-origin:0 0;transform:scaleX(1.0884);-webkit-text-stroke:0.16px #151515;">8.40 tonne</div>
<div class="t" id="tx62" style="left:681.4px;top:699.70px;font-size:13px;font-weight:400;color:#4a4a4a;letter-spacing:0.000px;transform-origin:0 0;transform:scaleX(1.1258);">CO<span style="font-size:9px;vertical-align:-2px">2</span>e/kg</div>
<div class="t" id="tx63" style="left:1222.8px;top:684.90px;font-size:13px;font-weight:400;color:#333;letter-spacing:0.000px;transform-origin:0 0;transform:scaleX(1.0603);">Reduzer</div>
<div class="a" style="left:1423px;top:677px;width:99px;height:32px;background:#e3eef8;border-radius:16px"></div>
<div class="t" id="tx64" style="left:1435.4px;top:686.00px;font-size:13px;font-weight:400;color:#3a7fc4;letter-spacing:0.154px;transform-origin:0 0;transform:scaleX(1.1400);-webkit-text-stroke:0.3px #3a7fc4;">Public data</div>
<svg class="a" style="left:1677.75px;top:682.4px" width="19.5" height="19.5" viewBox="0 0 24 24"><path fill="#666" d="M12 12c2.21 0 4-1.79 4-4s-1.79-4-4-4-4 1.79-4 4 1.79 4 4 4zm0 2c-2.67 0-8 1.34-8 4v2h16v-2c0-2.66-5.33-4-8-4z"/></svg>
<svg class="a" style="left:1788px;top:684px;" width="18" height="17" viewBox="0 0 18 17"><rect x="2" y="6" width="3" height="10" fill="#666"/><rect x="7.5" y="1" width="3" height="15" fill="#222"/><rect x="12.2" y="10" width="2.8" height="6" fill="#555"/><rect x="1" y="15.5" width="15.8" height="1.3" fill="#aaa"/></svg>
<svg class="a" style="left:1828px;top:686px;" width="4" height="12" viewBox="0 0 4 12"><circle cx="1.8" cy="1.9" r="1.4" fill="#111"/><circle cx="1.8" cy="5.9" r="1.4" fill="#111"/><circle cx="1.8" cy="9.9" r="1.4" fill="#111"/></svg>
<div class="a" style="left:275px;top:790px;width:14px;height:14px;border:1.8px solid #717171;border-radius:2px"></div>
<svg class="a" style="left:346px;top:758px;border-radius:5px" width="80" height="80" viewBox="0 0 80 80"><clipPath id="cwet"><rect width="80" height="80" rx="5"/></clipPath><g clip-path="url(#cwet)"><defs><linearGradient id="wt1" x1="0" y1="0" x2="0" y2="1"><stop offset="0" stop-color="#bdbdc1"/><stop offset="1" stop-color="#cfd0d3"/></linearGradient><linearGradient id="wt2" x1="0" y1="0" x2="0" y2="1"><stop offset="0" stop-color="#9c6232"/><stop offset="1" stop-color="#84502a"/></linearGradient></defs><rect width="80" height="80" fill="url(#wt1)"/><g fill="#a9a9ae" opacity=".6"><ellipse cx="30" cy="8" rx="22" ry="3"/><ellipse cx="55" cy="17" rx="20" ry="2.5"/></g><path d="M0 27 L10 26 L30 28 L55 28 L65 25 L80 25 V35 H0Z" fill="#3a4a2c"/><rect y="35" width="80" height="45" fill="url(#wt2)"/><filter id="wtn" x="0" y="0" width="1" height="1"><feTurbulence type="fractalNoise" baseFrequency=".45" numOctaves="2" seed="5"/><feColorMatrix values="0 0 0 0 0.4  0 0 0 0 0.2  0 0 0 0 0.08  0 0 0 -1.3 0.95"/></filter><rect y="35" width="80" height="45" fill="#000" filter="url(#wtn)" opacity=".75"/><path d="M4 66 Q20 62 36 62 Q50 60 56 52 Q66 48 80 50 V54 Q68 54 64 58 Q56 68 46 72 Q30 74 14 70 Q8 69 4 68Z" fill="#77777d"/><path d="M40 48 Q48 46 54 48" stroke="#9a9aa0" stroke-width="1.5" fill="none"/><ellipse cx="10" cy="55" rx="6" ry="2" fill="#9a9aa0"/><ellipse cx="22" cy="43" rx="3" ry="1.2" fill="#bbb"/><g fill="#6a3c1c" opacity=".45"><ellipse cx="30" cy="77" rx="20" ry="3"/><ellipse cx="66" cy="72" rx="14" ry="4"/><ellipse cx="20" cy="50" rx="12" ry="2"/><ellipse cx="60" cy="42" rx="10" ry="1.5"/></g></g></svg>
<div class="t" id="tx65" style="left:442.6px;top:772.10px;font-size:13px;font-weight:400;color:#222;letter-spacing:0.000px;transform-origin:0 0;transform:scaleX(1.1369);-webkit-text-stroke:0.16px #222;">Land use change from</div>
<div class="t" id="tx66" style="left:442.6px;top:790.60px;font-size:13px;font-weight:400;color:#222;letter-spacing:0.224px;transform-origin:0 0;transform:scaleX(1.1400);-webkit-text-stroke:0.16px #222;">wetlands</div>
<div class="t" id="tx67" style="left:442.6px;top:809.07px;font-size:11.5px;font-weight:400;color:#444;letter-spacing:0.026px;transform-origin:0 0;transform:scaleX(1.1400);">peat depth 2 meters</div>
<svg class="a" style="left:620.5px;top:790px;" width="14" height="14" viewBox="0 0 14 14"><circle cx="7" cy="7" r="6.1" fill="none" stroke="#3d8463" stroke-width="1.35"/><path d="M7 6.6v3.6" stroke="#3d8463" stroke-width="1.4" stroke-linecap="round"/><circle cx="7" cy="4.3" r=".85" fill="#3d8463"/></svg>
<div class="t" id="tx68" style="left:681.4px;top:776.15px;font-size:22.5px;font-weight:400;color:#151515;letter-spacing:0.000px;transform-origin:0 0;transform:scaleX(1.0583);-webkit-text-stroke:0.16px #151515;">33.70 tonne</div>
<div class="t" id="tx69" style="left:681.4px;top:804.70px;font-size:13px;font-weight:400;color:#4a4a4a;letter-spacing:0.000px;transform-origin:0 0;transform:scaleX(1.1258);">CO<span style="font-size:9px;vertical-align:-2px">2</span>e/kg</div>
<div class="t" id="tx70" style="left:1222.8px;top:789.90px;font-size:13px;font-weight:400;color:#333;letter-spacing:0.000px;transform-origin:0 0;transform:scaleX(1.0603);">Reduzer</div>
<div class="a" style="left:1423px;top:782px;width:99px;height:32px;background:#e3eef8;border-radius:16px"></div>
<div class="t" id="tx71" style="left:1435.4px;top:791.00px;font-size:13px;font-weight:400;color:#3a7fc4;letter-spacing:0.154px;transform-origin:0 0;transform:scaleX(1.1400);-webkit-text-stroke:0.3px #3a7fc4;">Public data</div>
<svg class="a" style="left:1677.75px;top:787.4px" width="19.5" height="19.5" viewBox="0 0 24 24"><path fill="#666" d="M12 12c2.21 0 4-1.79 4-4s-1.79-4-4-4-4 1.79-4 4 1.79 4 4 4zm0 2c-2.67 0-8 1.34-8 4v2h16v-2c0-2.66-5.33-4-8-4z"/></svg>
<svg class="a" style="left:1788px;top:789px;" width="18" height="17" viewBox="0 0 18 17"><rect x="2" y="6" width="3" height="10" fill="#666"/><rect x="7.5" y="1" width="3" height="15" fill="#222"/><rect x="12.2" y="10" width="2.8" height="6" fill="#555"/><rect x="1" y="15.5" width="15.8" height="1.3" fill="#aaa"/></svg>
<svg class="a" style="left:1828px;top:791px;" width="4" height="12" viewBox="0 0 4 12"><circle cx="1.8" cy="1.9" r="1.4" fill="#111"/><circle cx="1.8" cy="5.9" r="1.4" fill="#111"/><circle cx="1.8" cy="9.9" r="1.4" fill="#111"/></svg>
<div class="t" id="tx72" style="left:1339.2px;top:955.80px;font-size:13px;font-weight:400;color:#333;letter-spacing:0.000px;transform-origin:0 0;transform:scaleX(1.0998);">Items per page:</div>
<div class="a" style="left:1446px;top:944px;width:90px;height:40px;border:1px solid #8a8a8a;border-radius:4px"></div>
<div class="t" id="tx73" style="left:1461.5px;top:954.81px;font-size:17px;font-weight:400;color:#333;letter-spacing:0.200px;transform-origin:0 0;transform:none;">50</div>
<svg class="a" style="left:1506px;top:961px;" width="11" height="6" viewBox="0 0 11 6"><path d="M0 0h10.5L5.25 5.5z" fill="#666"/></svg>
<div class="t" id="tx74" style="left:1590px;top:955.80px;font-size:13px;font-weight:400;color:#333;letter-spacing:-0.000px;transform-origin:0 0;transform:scaleX(1.0522);">1-5 of 5</div>
<svg class="a" style="left:1667px;top:957px;" width="14" height="12" viewBox="0 0 14 12"><path d="M2 0.5v11" stroke="#bdbdbd" stroke-width="1.8"/><path d="M12 1l-5 5 5 5" fill="none" stroke="#bdbdbd" stroke-width="1.8"/></svg>
<svg class="a" style="left:1713px;top:957px;" width="10" height="12" viewBox="0 0 10 12"><path d="M8 1l-5 5 5 5" fill="none" stroke="#bdbdbd" stroke-width="1.8"/></svg>
<svg class="a" style="left:1759px;top:957px;" width="10" height="12" viewBox="0 0 10 12"><path d="M2 1l5 5-5 5" fill="none" stroke="#bdbdbd" stroke-width="1.8"/></svg>
<svg class="a" style="left:1801px;top:957px;" width="14" height="12" viewBox="0 0 14 12"><path d="M12 0.5v11" stroke="#bdbdbd" stroke-width="1.8"/><path d="M2 1l5 5-5 5" fill="none" stroke="#bdbdbd" stroke-width="1.8"/></svg>
<div class="a" style="left:1901px;top:262px;width:11px;height:755px;background:linear-gradient(to right,rgba(0,0,0,.035),rgba(0,0,0,.02));-webkit-mask-image:linear-gradient(to bottom,transparent,#000 35px)"></div>
<div class="a" style="left:1842px;top:950px;width:60px;height:60px;background:#3d8463;border-radius:50%;box-shadow:0 2px 6px rgba(0,0,0,.25)"></div>
<svg class="a" style="left:1855px;top:962px;" width="34" height="34" viewBox="0 0 34 34"><g fill="none" stroke="#fff" stroke-width="1.9"><path d="M11 5h16a2 2 0 0 1 2 2v12"/><path d="M5 10.5a2 2 0 0 1 2-2h16a2 2 0 0 1 2 2v12a2 2 0 0 1-2 2H11.5l-6.5 5.5z"/></g></svg>
<div class="a" style="left:0px;top:0px;width:22px;height:1017px;background:linear-gradient(to right,rgba(0,0,0,0.04),rgba(0,0,0,0.01) 60%,rgba(0,0,0,0))"></div>
</body></html>
